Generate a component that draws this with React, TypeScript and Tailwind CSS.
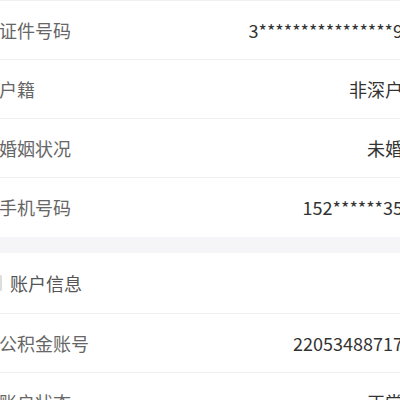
import React from "react";

type Row = { label: string; value: string };

const personal: Row[] = [
  { label: "证件号码", value: "3****************9" },
  { label: "户籍", value: "非深户" },
  { label: "婚姻状况", value: "未婚" },
  { label: "手机号码", value: "152******35" },
];

const account: Row[] = [
  { label: "公积金账号", value: "22053488717" },
  { label: "账户状态", value: "正常" },
];

const InfoRow = ({ label, value, last }: Row & { last?: boolean }) => (
  <div
    className={`flex h-[59px] items-center justify-between ${
      last ? "" : "border-b border-[#f0f0f2]"
    }`}
  >
    <span className="text-[18px] text-[#666666]">{label}</span>
    <span className="text-[18px] text-[#333333]">{value}</span>
  </div>
);

export default function App() {
  return (
    <div
      className="h-[400px] w-[400px] overflow-hidden bg-white"
      style={{ fontFamily: '"Noto Sans CJK SC", "Noto Sans", sans-serif' }}
    >
      <div className="-ml-[1px] w-[404px]">
        <div className="border-t border-[#f0f0f2]">
          {personal.map((row, i) => (
            <InfoRow key={row.label} {...row} last={i === personal.length - 1} />
          ))}
        </div>
        <div className="h-[16px] bg-[#f5f5f7]" />
        <div className="flex h-[61px] items-center gap-[8px] border-b border-[#f0f0f2]">
          <div className="h-[16px] w-[3px] rounded-sm bg-[#dddddd]" />
          <span className="text-[18px] text-[#555555]">账户信息</span>
        </div>
        {account.map((row) => (
          <InfoRow key={row.label} {...row} />
        ))}
      </div>
    </div>
  );
}
